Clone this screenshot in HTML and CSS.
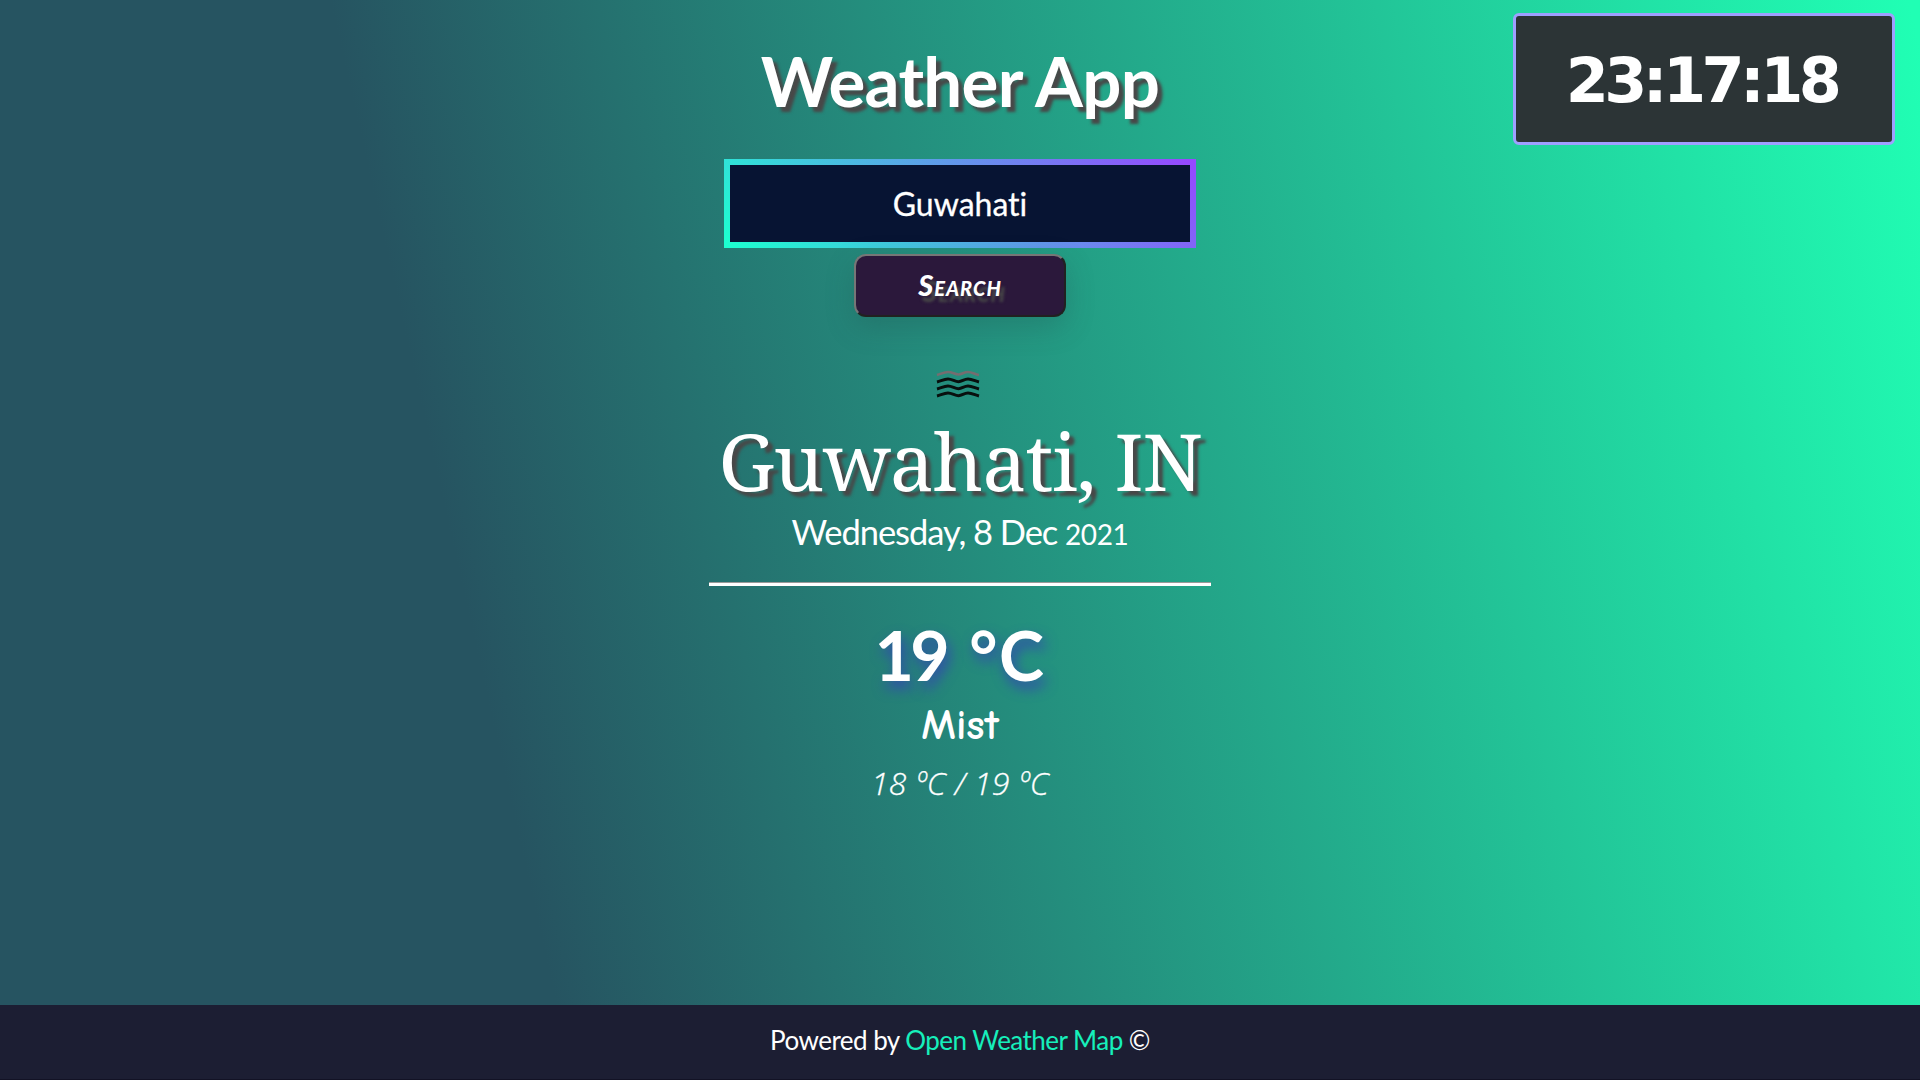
FILE: index.html
```
<!DOCTYPE html>
<html lang="en">
<head>
<meta charset="utf-8">
<title>Weather App</title>
<link rel="stylesheet" href="styles.css">
</head>
<body>
<main class="app">
  <h1 class="title">Weather App</h1>
  <form class="search">
    <input class="search-box" type="text" value="Guwahati" aria-label="City">
    <button class="search-btn" type="button">Search</button>
  </form>
  <section class="weather">
    <svg class="mist-icon" width="44" height="30" viewBox="0 0 44 30" fill="none" stroke-width="3">
      <path stroke="#756d70" stroke-width="2.600" d="M1 5C5 4 8 2 12 2S19 4.500 22.500 4.500 28 2 32 2 39 4.500 43 5"/>
      <path stroke="#08100e" d="M1 12C5 11 8 9 12 9S19 11.700 22.500 11.700 28 9 32 9 39 11 43 12"/>
      <path stroke="#08100e" d="M1 19C5 18 8 16 12 16S19 18.700 22.500 18.700 28 16 32 16 39 18 43 19"/>
      <path stroke="#08100e" d="M1 26C5 25 8 23 12 23S19 25.700 22.500 25.700 28 23 32 23 39 25 43 26"/>
    </svg>
    <div class="city">Guwahati, IN</div>
    <div class="date">Wednesday, 8 Dec <span class="year">2021</span></div>
    <hr class="rule">
    <div class="temp">19 <span class="unit">°C</span></div>
    <div class="condition">Mist</div>
    <div class="range">18 ºC / 19 ºC</div>
  </section>
</main>
<footer class="footer">Powered by&nbsp;<a class="link" href="#">Open Weather Map</a>&nbsp;©</footer>
<div class="clock"><span class="digits">23:17:18</span></div>
</body>
</html>
```
FILE: styles.css
```
* {
  box-sizing: border-box;
}

body {
  margin: 0;
  height: 1080px;
  overflow: hidden;
  display: flex;
  flex-direction: column;
  color: #fff;
  font-family: Lato, sans-serif;
  background: linear-gradient(77.3deg, #265461 26.5%, #20ffb4 99.5%);
}

.app {
  flex: 1;
  display: flex;
  flex-direction: column;
  align-items: center;
}

.title {
  margin: 40px 0 0;
  height: 82px;
  font-size: 69px;
  line-height: 82px;
  font-weight: 700;
  letter-spacing: -0.7px;
  text-shadow: 5px 5px 3px #484848;
}

.search {
  margin-top: 37px;
  display: flex;
  flex-direction: column;
  align-items: center;
  gap: 6px;
}

.search-box {
  width: 472px;
  height: 89px;
  padding: 0;
  border: 6px solid;
  border-image: linear-gradient(45deg, #1dffd0, #9648ff) 1;
  background: #071433;
  color: #fff;
  font: 400 32px Lato, sans-serif;
  font-variant-ligatures: none;
  -webkit-text-stroke: 0.3px #fff;
  text-align: center;
}

.search-btn {
  width: 212px;
  height: 63px;
  padding: 0 0 2px;
  border: 2px solid;
  border-color: #767676 #212121 #212121 #767676;
  border-radius: 12px;
  background: #2b183b;
  color: #fff;
  font: italic small-caps 900 29px Lato, sans-serif;
  letter-spacing: 1px;
  text-shadow: 4px 6px 3px #484848;
  box-shadow: 0 10px 28px rgba(36, 70, 72, 0.26);
}

.weather {
  margin-top: 53px;
  display: flex;
  flex-direction: column;
  align-items: center;
}

.mist-icon {
  margin-right: 5px;
}

.city {
  margin-top: 13px;
  height: 98px;
  font: 400 79px/96px "Noto Serif", serif;
  letter-spacing: -1.1px;
  text-shadow: 5px 5px 3px #484848;
  white-space: nowrap;
}

.date {
  height: 40px;
  font-size: 34.5px;
  line-height: 42px;
  letter-spacing: -1.05px;
  white-space: nowrap;
}

.year {
  font-size: 28px;
  letter-spacing: -0.4px;
}

.rule {
  width: 502px;
  height: 4px;
  margin: 31px 0 0;
  border: 0;
  border-top: 1px solid #9a9a9a;
  background: #fff;
}

.temp {
  margin-top: 28px;
  height: 83px;
  font-size: 68px;
  line-height: 82px;
  font-weight: 700;
  letter-spacing: -3.5px;
  word-spacing: 10px;
  text-shadow: 3px 7px 13px #3448b0;
}

.unit {
  letter-spacing: 1.5px;
}

.condition {
  margin-top: 3px;
  height: 50px;
  font: 700 43px/50px "Comic Neue", Lato, sans-serif;
}

.range {
  margin-top: 11px;
  height: 42px;
  font: italic 300 32px/44px "Open Sans", sans-serif;
  letter-spacing: 0.3px;
  -webkit-text-stroke: 0.3px #fff;
}

.footer {
  height: 75px;
  display: flex;
  align-items: center;
  justify-content: center;
  background: #1c1e33;
  border-bottom: 1px solid #121225;
  padding-bottom: 4px;
  font-size: 26px;
  letter-spacing: -0.53px;
}

.link {
  color: #16efbb;
  text-decoration: none;
}

.clock {
  position: absolute;
  top: 13px;
  right: 25px;
  width: 382px;
  height: 132px;
  padding: 4px 5px 0 0;
  display: flex;
  align-items: center;
  justify-content: center;
  border: 3px solid #9f9fff;
  border-radius: 6px;
  background: #2c3436;
}

.digits {
  font: 700 62px/1 "DejaVu Sans", sans-serif;
  letter-spacing: -4.6px;
}
```
